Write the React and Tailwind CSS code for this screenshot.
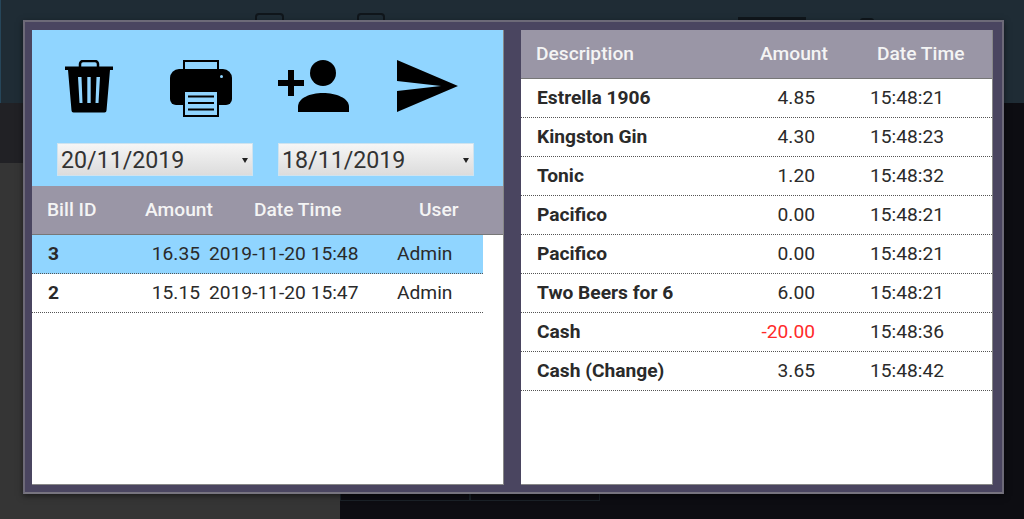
import React from 'react';

const bills = [
    { id: '3', amount: '16.35', date: '2019-11-20 15:48', user: 'Admin', selected: true },
    { id: '2', amount: '15.15', date: '2019-11-20 15:47', user: 'Admin' },
];

const items = [
    { name: 'Estrella 1906', amount: '4.85', time: '15:48:21' },
    { name: 'Kingston Gin', amount: '4.30', time: '15:48:23' },
    { name: 'Tonic', amount: '1.20', time: '15:48:32' },
    { name: 'Pacifico', amount: '0.00', time: '15:48:21' },
    { name: 'Pacifico', amount: '0.00', time: '15:48:21' },
    { name: 'Two Beers for 6', amount: '6.00', time: '15:48:21' },
    { name: 'Cash', amount: '-20.00', time: '15:48:36', negative: true },
    { name: 'Cash (Change)', amount: '3.65', time: '15:48:42' },
];

const TrashIcon = () => (
    <svg width="48" height="53" viewBox="0 0 48 53" className="block">
        <path d="M15 8V4a3 3 0 0 1 3-3h12a3 3 0 0 1 3 3v4" fill="none" stroke="#000" strokeWidth="2.5" />
        <path fillRule="evenodd" d="M0 6.500h48v3.500h-3L41.500 50.500a2 2 0 0 1-2 2h-31a2 2 0 0 1-2-2L3 10H0Z M13 17l1.500 26h3L16.500 17Z M22.300 17v26h3.400V17Z M31.500 17l-1 26h3L35 17Z" fill="#000" />
    </svg>
);

const PrinterIcon = () => (
    <svg width="62" height="57" viewBox="0 0 62 57" className="block">
        <path d="M14 9V1h34v8" fill="none" stroke="#000" strokeWidth="2" />
        <path d="M9 9h44a9 9 0 0 1 9 9v21a6 6 0 0 1-6 6h-43h-7a6 6 0 0 1-6-6V18a9 9 0 0 1 9-9Z" fill="#000" />
        <circle cx="51.500" cy="16.500" r="1.500" fill="#90d5ff" />
        <rect x="14" y="31" width="34" height="25" fill="#90d5ff" stroke="#000" strokeWidth="2" />
        <path d="M18 36.500h26M18 43h26M18 49.500h26" stroke="#000" strokeWidth="2" />
    </svg>
);

const AddUserIcon = () => (
    <svg width="72" height="52" viewBox="0 0 72 52" className="block">
        <path d="M10 10h6v10h10v6H16v10h-6V26H0v-6h10Z" fill="#000" />
        <circle cx="45" cy="13" r="13" fill="#000" />
        <path d="M20 52v-5C20 38 32 33 45 33S71 38 71 47v5Z" fill="#000" />
    </svg>
);

const SendIcon = () => (
    <svg width="62" height="52" viewBox="0 0 62 52" className="block">
        <path d="M0 0 61 26 0 52V31L44 26 0 21Z" fill="#000" />
    </svg>
);

const DateSelect = ({ value }) => (
    <div className="flex h-[33px] w-[196px] items-center justify-between border border-[#cfe3ef] bg-gradient-to-b from-[#f6f6f6] to-[#dcdcdc] pl-[3px] pr-[4px] pt-[1px] text-[23.200px] text-[#333]">
        <span>{value}</span>
        <svg width="6" height="6" viewBox="0 0 6 6"><path d="M0 1h6L3 6Z" fill="#222" /></svg>
    </div>
);

export default function App() {
    return (
        <div className="relative h-[519px] w-[1024px] overflow-hidden bg-[#0d0d12] font-['Roboto',sans-serif]">
            {/* page behind the dialog */}
            <div className="flex h-[103px] items-start border-l border-[#26465a] bg-[#1f2c35] pl-[254px] pt-[13px]">
                <div className="h-[20px] w-[29px] rounded-[4px] border-2 border-[#10161b]"></div>
                <div className="ml-[73px] h-[20px] w-[28px] rounded-[4px] border-2 border-[#10161b]"></div>
                <div className="ml-[353px] mt-[4px] h-[4px] w-[68px] bg-[#10161b]"></div>
                <div className="ml-[54px] mt-[5px] h-[3px] w-[14px] rounded-t-full bg-[#10161b]"></div>
            </div>
            <div className="flex h-[416px]">
                <div className="flex w-[340px] flex-col">
                    <div className="h-[60px] bg-[#212125]"></div>
                    <div className="flex-1 bg-[#353535]"></div>
                </div>
                <div className="flex flex-1 items-end pb-[18px]">
                    <div className="h-[8px] w-[130px] border border-[#1a2228]"></div>
                    <div className="h-[8px] w-[130px] border border-[#1a2228]"></div>
                </div>
            </div>

            {/* dialog */}
            <div className="absolute left-[23px] top-[20px] flex h-[474px] w-[981px] gap-[17px] border-2 border-[#6d6a78] border-b-[#77747f] bg-[#4a4560] pb-[7px] pl-[7px] pr-[9px] pt-[8px] shadow-[0_2px_6px_rgba(0,0,0,0.5)]">
                <div className="flex w-[472px] flex-col border-b border-r border-[#888] bg-white">
                    <div className="flex h-[156px] flex-col bg-[#90d5ff]">
                        <div className="flex h-[113px] items-start pt-[30px]">
                            <div className="ml-[33px]"><TrashIcon /></div>
                            <div className="ml-[57px]"><PrinterIcon /></div>
                            <div className="ml-[46px]"><AddUserIcon /></div>
                            <div className="ml-[47px]"><SendIcon /></div>
                        </div>
                        <div className="flex gap-[25px] pl-[25px]">
                            <DateSelect value="20/11/2019" />
                            <DateSelect value="18/11/2019" />
                        </div>
                    </div>
                    <div className="grid h-[49px] grid-cols-[70px_110px_160px_1fr] items-center border-b border-[#777] bg-[#9a96a6] text-[19.200px] font-medium text-[#f4f4f4]">
                        <span className="pl-[15px]">Bill ID</span>
                        <span className="pl-[43px]">Amount</span>
                        <span className="pl-[42px]">Date Time</span>
                        <span className="pl-[47px]">User</span>
                    </div>
                    {bills.map((bill) => (
                        <div
                            key={bill.id}
                            className={`grid h-[39px] w-[451px] grid-cols-[70px_99px_167px_1fr] items-center border-b border-dotted border-[#555] text-[19.200px] text-[#2a2a2a] ${bill.selected ? 'bg-[#90d5ff]' : ''}`}
                        >
                            <span className="pl-[16px] font-bold">{bill.id}</span>
                            <span className="pr-[1px] text-right">{bill.amount}</span>
                            <span className="pl-[8px]">{bill.date}</span>
                            <span className="pl-[29px]">{bill.user}</span>
                        </div>
                    ))}
                </div>

                <div className="flex w-[472px] flex-col border-b border-r border-[#888] bg-white">
                    <div className="grid h-[49px] grid-cols-[196px_99px_1fr] items-center border-b border-[#777] bg-[#9a96a6] text-[19.200px] font-medium text-[#f4f4f4]">
                        <span className="pl-[15px]">Description</span>
                        <span className="pl-[43px]">Amount</span>
                        <span className="pl-[61px]">Date Time</span>
                    </div>
                    {items.map((item, i) => (
                        <div
                            key={i}
                            className="grid h-[39px] grid-cols-[196px_99px_1fr] items-center border-b border-dotted border-[#555] text-[19.200px] text-[#2a2a2a]"
                        >
                            <span className="pl-[16px] font-bold">{item.name}</span>
                            <span className={`pr-[1px] text-right ${item.negative ? 'text-[#ff2a2a]' : ''}`}>{item.amount}</span>
                            <span className="pl-[54px]">{item.time}</span>
                        </div>
                    ))}
                </div>
            </div>
        </div>
    );
}
